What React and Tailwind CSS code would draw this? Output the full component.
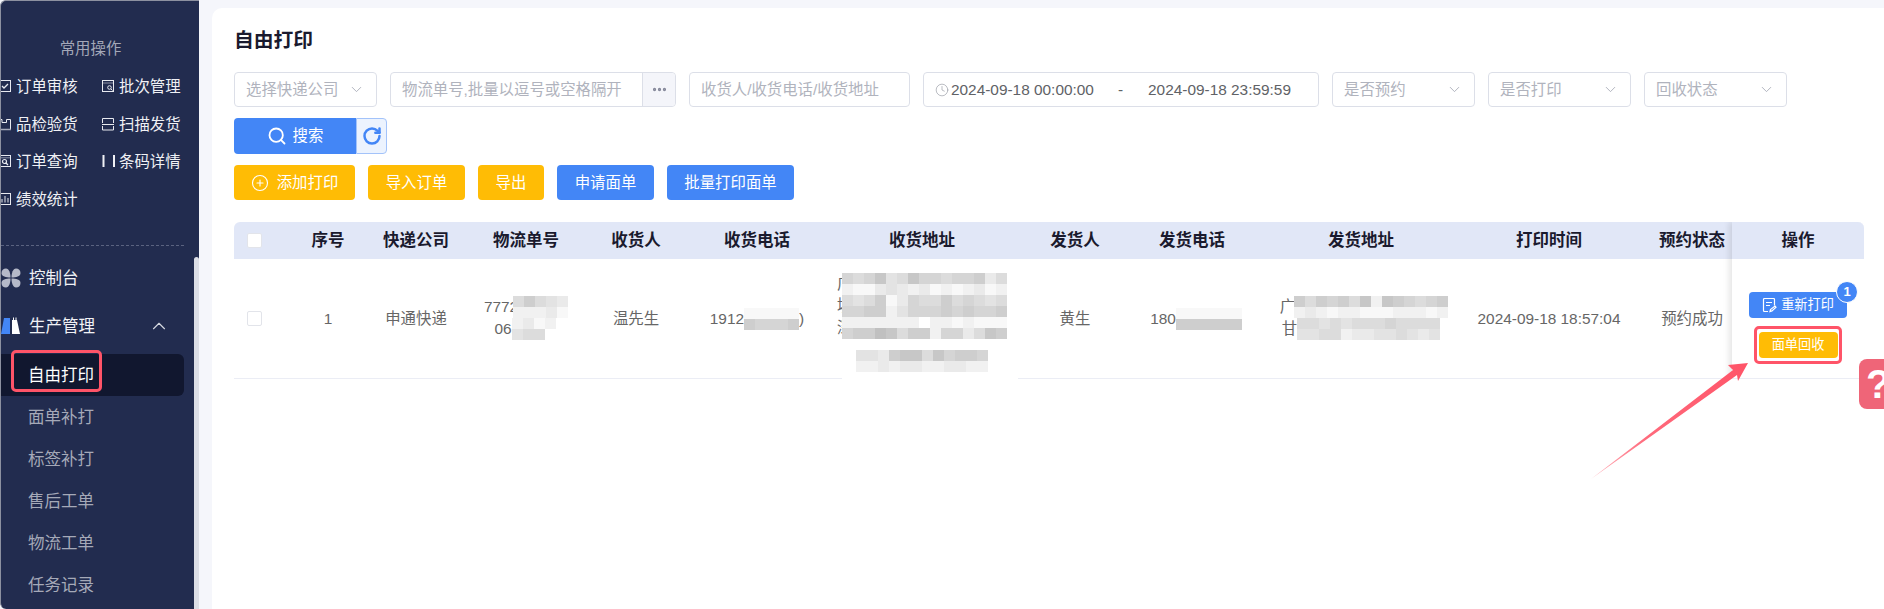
import React from "react";
import {
  ChevronDown,
  ChevronUp,
  CirclePlus,
  Clock,
  Ellipsis,
  RotateCw,
  Search,
} from "lucide-react";

const font = "font-['Liberation_Sans','Noto_Sans_CJK_SC',sans-serif]";

const grays = ["#ffffff", "#f8f8f8", "#f1f1f1", "#eaeaea", "#e3e3e3", "#dcdcdc", "#d5d5d5", "#cecece", "#c7c7c7", "#c0c0c0"];

// pixelated patches that hide the private data, one string per row of 11px cells
function Mosaic({ rows, className = "" }) {
  return (
    <span className={`relative z-10 inline-flex flex-col align-top ${className}`}>
      {rows.map((row, i) => (
        <span key={i} className="flex">
          {row.split("").map((c, j) => (
            <span key={j} className="block w-[11px] h-[11px]" style={{ background: grays[Number(c)] }} />
          ))}
        </span>
      ))}
    </span>
  );
}

function QuickIcon({ type }) {
  return (
    <svg width="15" height="15" viewBox="0 0 15 15" fill="none" stroke="#e8eaf0" strokeWidth="1" className="shrink-0">
      {type === "check" && (
        <>
          <rect x="2.5" y="1.5" width="11" height="11" />
          <path d="M5 7l2 2 4-4" strokeWidth="1.3" />
        </>
      )}
      {type === "batch" && (
        <>
          <rect x="2.5" y="1.5" width="11" height="11" />
          <path d="M3 4h10" stroke="#8b90a5" />
          <circle cx="9.5" cy="8.5" r="1.8" />
          <path d="M11 10l1.5 1.5" />
        </>
      )}
      {type === "box" && (
        <>
          <path d="M2.5 12V2.5h2.5v3h4.5v-3h4V12" />
          <path d="M2 12.5h12" stroke="#a8acbc" strokeWidth="1.6" />
        </>
      )}
      {type === "scan" && (
        <>
          <path d="M2.5 6V1.5h11V6" />
          <path d="M2 7.5h12" />
          <path d="M2.5 9v4h11V9" />
        </>
      )}
      {type === "query" && (
        <>
          <rect x="2.5" y="1.5" width="11" height="11" />
          <path d="M3 3.8h10" stroke="#8b90a5" />
          <circle cx="7.5" cy="7.5" r="2" strokeWidth="1.2" />
          <path d="M9 9l2 2" strokeWidth="1.2" />
        </>
      )}
      {type === "bars" && (
        <>
          <rect x="2.5" y="1" width="2" height="12" fill="#f0f1f5" stroke="none" />
          <rect x="13" y="1" width="2" height="12" fill="#f0f1f5" stroke="none" />
        </>
      )}
      {type === "stats" && (
        <>
          <rect x="2.5" y="1.5" width="11" height="11" />
          <path d="M5 10.5V7M8 10.5V4M11 10.5V6" />
        </>
      )}
    </svg>
  );
}

function DashIcon() {
  return (
    <svg width="20" height="20" viewBox="0 0 20 20" fill="#b5b9c8" className="shrink-0">
      <path d="M9.5 9.5C5 9.5 .5 8.5 .5 5 .5 2 2.5 .5 5 .5c3 0 4.5 4.5 4.5 9z" />
      <path d="M10.5 9.5c4.5 0 9-1 9-4.5 0-3-2-4.5-4.5-4.5-3 0-4.5 4.500-4.500 9z" />
      <path d="M9.500 10.500C5 10.500 .5 11.500 .5 15c0 3 2 4.500 4.500 4.500 3 0 4.500-4.500 4.500-9z" />
      <path d="M10.500 10.500c4.500 0 9 1 9 4.500 0 3-2 4.500-4.500 4.500-3 0-4.500-4.500-4.500-9z" />
    </svg>
  );
}

function BooksIcon() {
  return (
    <svg width="20" height="18" viewBox="0 0 20 18" className="shrink-0">
      <path d="M3 1h6v16H0z" fill="#4386f6" />
      <path d="M11 3h5l3 14h-8z" fill="#ffffff" />
      <path d="M12.5 0.5v3M15 0.5v3" stroke="#ffffff" strokeWidth="1" />
    </svg>
  );
}

function NoteIcon() {
  return (
    <svg width="15" height="15" viewBox="0 0 15 15" fill="none" stroke="#ffffff" strokeWidth="1.2" className="shrink-0">
      <path d="M6 13.5H2.500a1 1 0 0 1-1-1v-11a1 1 0 0 1 1-1h9a1 1 0 0 1 1 1v6" />
      <path d="M4 4.500h6M4 7.500h4" />
      <path d="M8 13.500l.5-2 4.500-3.500 1 1.200-4 3.700z" />
    </svg>
  );
}

const quick = [
  ["check", "订单审核"],
  ["batch", "批次管理"],
  ["box", "品检验货"],
  ["scan", "扫描发货"],
  ["query", "订单查询"],
  ["bars", "条码详情"],
  ["stats", "绩效统计"],
];

const subMenu = ["自由打印", "面单补打", "标签补打", "售后工单", "物流工单", "任务记录"];

function Sidebar() {
  return (
    <aside className="relative w-[199px] h-full shrink-0 overflow-hidden bg-[#222c4f] border-l border-t border-[#8d91a0] rounded-l-[6px]">
      <div className="pt-[38px] w-[179px] text-center text-[15.4px] leading-[20px] text-[#a4a8b8]">常用操作</div>
      <div className="grid grid-cols-[103px_90px] auto-rows-[37.5px] -ml-[4px] mt-[9px]">
        {quick.map(([type, label]) => (
          <div key={label} className="flex items-center gap-[4px] text-[15.4px] text-[#f0f1f5]">
            <QuickIcon type={type} />
            <span className="whitespace-nowrap">{label}</span>
          </div>
        ))}
      </div>
      <div className="mt-[27px] w-[183px] border-t border-dashed border-[#5b6380]" />
      <div className="flex items-center gap-[8px] h-[42px] mt-[11px] text-[16.5px] text-[#f0f1f5]">
        <DashIcon />
        <span>控制台</span>
      </div>
      <div className="flex items-center gap-[8px] h-[42px] mt-[6px] text-[16.5px] text-[#f0f1f5]">
        <BooksIcon />
        <span>生产管理</span>
        <ChevronUp size={22} strokeWidth={1.25} className="ml-[45px] text-[#d5d8e0]" />
      </div>
      <div className="mt-[7px] w-[183px]">
        {subMenu.map((item, i) => (
          <div
            key={item}
            className={
              i === 0
                ? "flex items-center h-[42px] pl-[27px] text-[16.5px] text-white bg-[#11172f] rounded-r-[6px]"
                : "flex items-center h-[42px] pl-[27px] text-[16.5px] text-[#a5a9b8]"
            }
          >
            {item}
          </div>
        ))}
      </div>
      <div className="absolute right-0 top-[256px] bottom-0 w-[5px] bg-[#dcdee6] rounded-t-[3px]" />
    </aside>
  );
}

function SelectBox({ label }) {
  return (
    <div className="flex items-center justify-between w-[143px] h-[35px] shrink-0 pl-[11px] pr-[11px] bg-white border border-[#dcdfe8] rounded-[4px] text-[15.4px] text-[#b0b3bd] whitespace-nowrap">
      <span>{label}</span>
      <ChevronDown size={17} strokeWidth={1.25} className="text-[#a8abb6]" />
    </div>
  );
}

function Filters() {
  return (
    <div className="flex gap-[13px] mt-[18px]">
      <SelectBox label="选择快递公司" />
      <div className="flex w-[286px] h-[35px] shrink-0 bg-white border border-[#dcdfe8] rounded-[4px] text-[15.4px] text-[#b0b3bd]">
        <div className="flex-1 flex items-center pl-[11px] whitespace-nowrap overflow-hidden">物流单号,批量以逗号或空格隔开</div>
        <div className="flex items-center justify-center w-[33px] bg-[#f4f5fa] border-l border-[#dcdfe8] rounded-r-[4px]">
          <Ellipsis size={17} strokeWidth={2.6} className="text-[#85889a]" />
        </div>
      </div>
      <div className="flex items-center w-[221px] h-[35px] shrink-0 pl-[11px] bg-white border border-[#dcdfe8] rounded-[4px] text-[15.4px] text-[#b0b3bd] whitespace-nowrap">
        收货人/收货电话/收货地址
      </div>
      <div className="flex items-center w-[396px] h-[35px] shrink-0 pl-[11px] bg-white border border-[#dcdfe8] rounded-[4px] text-[15.4px] text-[#606266] whitespace-nowrap">
        <Clock size={14} strokeWidth={1} className="text-[#8a8d98] mr-[2px]" />
        <span>2024-09-18 00:00:00</span>
        <span className="ml-[24px] mr-[25px]">-</span>
        <span>2024-09-18 23:59:59</span>
      </div>
      <SelectBox label="是否预约" />
      <SelectBox label="是否打印" />
      <SelectBox label="回收状态" />
    </div>
  );
}

function Actions() {
  const yellow = "flex items-center justify-center h-[35px] rounded-[4px] bg-[#ffbc05] text-white text-[15.4px]";
  const blue = "flex items-center justify-center h-[35px] rounded-[4px] bg-[#4386f6] text-white text-[15.4px]";
  return (
    <>
      <div className="flex mt-[11px] h-[36px]">
        <div className="flex items-center justify-center gap-[6px] w-[122px] bg-[#4386f6] rounded-l-[4px] text-white text-[15.4px]">
          <Search size={20} strokeWidth={2.2} />
          <span>搜索</span>
        </div>
        <div className="flex items-center justify-center w-[31px] bg-[#ecf3fe] border border-[#a3c3fa] rounded-r-[4px]">
          <RotateCw size={20} strokeWidth={3} className="text-[#4386f6]" />
        </div>
      </div>
      <div className="flex gap-[13px] mt-[11px]">
        <div className={`${yellow} w-[121px] gap-[8px]`}>
          <CirclePlus size={18} strokeWidth={1.5} />
          <span>添加打印</span>
        </div>
        <div className={`${yellow} w-[97px]`}>导入订单</div>
        <div className={`${yellow} w-[66px]`}>导出</div>
        <div className={`${blue} w-[97px]`}>申请面单</div>
        <div className={`${blue} w-[127px]`}>批量打印面单</div>
      </div>
    </>
  );
}

const cols = [
  "w-[54px] pl-[13px] justify-start",
  "w-[80px] justify-center",
  "w-[96px] justify-center",
  "w-[124px] justify-center",
  "w-[96px] justify-center",
  "w-[146px] justify-center",
  "w-[184px] justify-center",
  "w-[122px] justify-center",
  "w-[112px] justify-center",
  "w-[226px] justify-center",
  "w-[150px] justify-center",
  "w-[136px] justify-center",
];

const headers = ["", "序号", "快递公司", "物流单号", "收货人", "收货电话", "收货地址", "发货人", "发货电话", "发货地址", "打印时间", "预约状态"];

const checkbox = "block w-[15px] h-[15px] bg-white border border-[#e2e4ea] rounded-[2px]";

// first glyph of a masked line, the patch lies over most of it
function PeekGlyph({ children }) {
  return <span className="inline-block w-[16px] -mr-[11px] leading-[22px]">{children}</span>;
}

function Table() {
  const cells = [
    <span className={checkbox} />,
    "1",
    "申通快递",
    <div className="text-center leading-[22px] -mt-[2px]">
      <div className="flex justify-center">
        <span className="-mr-[5px]">7772</span>
        <Mosaic rows={["57543", "22231"]} />
      </div>
      <div className="flex justify-center -ml-[2px]">
        <span>06</span>
        <Mosaic rows={["2312", "4550"]} />
      </div>
    </div>,
    "温先生",
    <div className="flex items-center leading-[22px]">
      <span>1912</span>
      <Mosaic rows={["11111", "76667"]} />
      <span>)</span>
    </div>,
    <div className="relative w-[184px] h-[119px] flex flex-col items-center pt-[14px]">
      <div className="flex">
        <PeekGlyph>广</PeekGlyph>
        <Mosaic rows={["656845866566735", "211343231212312"]} />
      </div>
      <div className="flex">
        <PeekGlyph>填</PeekGlyph>
        <Mosaic rows={["545713655756545", "667724666767667"]} />
      </div>
      <div className="flex">
        <PeekGlyph>深</PeekGlyph>
        <Mosaic rows={["222222202212111", "677985772663587"]} />
      </div>
      <Mosaic rows={["443788586776", "223233223322"]} className="mt-[11px]" />
      <div className="absolute left-[12px] top-[118px] w-[176px] h-[7px] bg-white" />
    </div>,
    "黄生",
    <div className="flex items-center leading-[22px] ml-[8px]">
      <span>180</span>
      <Mosaic rows={["111111", "777777"]} />
    </div>,
    <div className="leading-[22px] -mt-[1px]">
      <div className="flex justify-center ml-[6px]">
        <span className="-mr-[1px]">广</span>
        <Mosaic rows={["75767582876567", "23212211122212"]} />
      </div>
      <div className="flex justify-center">
        <span>甘</span>
        <Mosaic rows={["5545455565555", "4455233445434"]} />
      </div>
    </div>,
    "2024-09-18 18:57:04",
    "预约成功",
  ];

  return (
    <div className="relative w-[1630px] mt-[22px] overflow-hidden rounded-t-[6px]">
      <div className="flex h-[37px] bg-[#e1e7f7] text-[16.5px] font-bold text-[#1a1a2e]">
        {headers.map((h, i) => (
          <div key={i} className={`flex items-center shrink-0 whitespace-nowrap ${cols[i]}`}>
            {i === 0 ? <span className={checkbox} /> : h}
          </div>
        ))}
      </div>
      <div className="flex h-[120px] border-b border-[#ebedf5] text-[15.4px] text-[#666666]">
        {cells.map((c, i) => (
          <div key={i} className={`flex items-center shrink-0 whitespace-nowrap ${cols[i]}`}>
            {c}
          </div>
        ))}
      </div>
      <div className="absolute right-0 top-0 h-[157px] w-[132px] bg-white shadow-[-3px_0_6px_rgba(0,0,0,0.1)] border-b border-[#ebedf5]">
        <div className="flex items-center justify-center h-[37px] bg-[#e1e7f7] text-[16.5px] font-bold text-[#1a1a2e]">操作</div>
        <div className="flex flex-col items-center gap-[14px] pt-[33px]">
          <div className="relative flex items-center justify-center gap-[4px] w-[98px] h-[26px] bg-[#4386f6] rounded-[4px] text-white text-[13.2px]">
            <NoteIcon />
            <span>重新打印</span>
          </div>
          <div className="flex items-center justify-center w-[79px] h-[26px] bg-[#ffbc05] rounded-[4px] text-white text-[13.2px]">面单回收</div>
        </div>
      </div>
      <div className="absolute left-[1602px] top-[59px] flex items-center justify-center w-[22px] h-[22px] bg-[#4386f6] border border-white rounded-full text-white text-[13px] font-bold">1</div>
    </div>
  );
}

function Annotations() {
  return (
    <>
      <div className="absolute left-[11px] top-[350px] w-[91px] h-[42px] border-[3px] border-[#ff5468] rounded-[5px]" />
      <div className="absolute left-[1754px] top-[326px] w-[88px] h-[38px] border-[3px] border-[#ff5468] rounded-[5px]" />
      <svg className="absolute left-[1585px] top-[355px]" width="170" height="130" viewBox="1585 355 170 130">
        <defs>
          <linearGradient id="arrowFill" x1="1591" y1="479" x2="1748" y2="363" gradientUnits="userSpaceOnUse">
            <stop offset="0" stopColor="#ffb3bc" />
            <stop offset="0.35" stopColor="#ff6a7c" />
            <stop offset="1" stopColor="#ff5468" />
          </linearGradient>
        </defs>
        <polygon points="1591,479 1737,375 1738,381 1748,363 1728,365 1733,370" fill="url(#arrowFill)" />
      </svg>
      <div className="absolute right-0 top-[359px] flex items-center w-[25px] h-[50px] pl-[7px] bg-[#ef6578] rounded-l-[8px] overflow-hidden text-white text-[40px] font-bold">
        ?
      </div>
    </>
  );
}

export default function App() {
  return (
    <div className={`relative flex w-full h-[609px] overflow-hidden bg-[#f5f6fb] ${font}`}>
      <Sidebar />
      <main className="flex-1 ml-[13px] mt-[8px] pl-[22px] pt-[18px] bg-white rounded-tl-[10px] overflow-hidden">
        <h1 className="text-[19.8px] leading-[28px] font-bold text-[#1a1a2e]">自由打印</h1>
        <Filters />
        <Actions />
        <Table />
      </main>
      <Annotations />
    </div>
  );
}
